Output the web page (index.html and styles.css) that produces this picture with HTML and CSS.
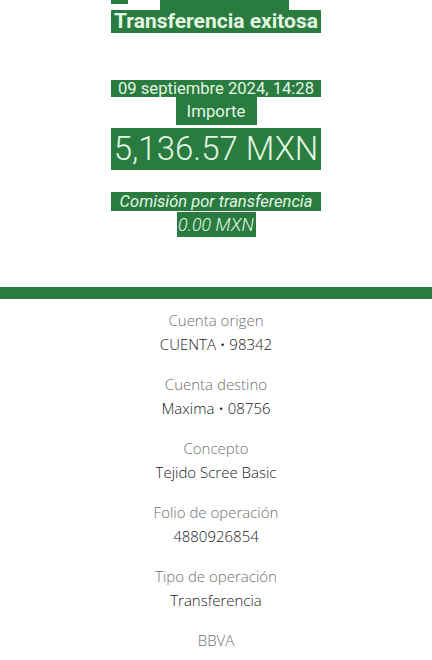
FILE: index.html
```html
<!DOCTYPE html>
<html lang="es">
<head>
    <meta charset="UTF-8">
    <meta name="viewport" content="width=device-width, initial-scale=1.0">
    <title>Transferencia exitosa</title>
    <link rel="stylesheet" href="styles.css">
</head>
<body>

<!-- Resumen -->
<div class="summary">
    <div class="stub">
        <span class="stub-a"></span>
        <span class="stub-b"></span>
    </div>
    <div class="line title"><span>Transferencia exitosa</span></div>
    <div class="line date"><span>09 septiembre 2024, 14:28</span></div>
    <div class="line label"><span>Importe</span></div>
    <div class="line amount"><span>5,136.57 MXN</span></div>
    <div class="line fee"><span>Comisión por transferencia</span></div>
    <div class="line fee-value"><span>0.00 MXN</span></div>
</div>

<div class="band"></div>

<!-- Detalle -->
<div class="details">
    <div class="item">
        <div class="item-label">Cuenta origen</div>
        <div class="item-value">CUENTA • 98342</div>
    </div>
    <div class="item">
        <div class="item-label">Cuenta destino</div>
        <div class="item-value">Maxima • 08756</div>
    </div>
    <div class="item">
        <div class="item-label">Concepto</div>
        <div class="item-value">Tejido Scree Basic</div>
    </div>
    <div class="item">
        <div class="item-label">Folio de operación</div>
        <div class="item-value">4880926854</div>
    </div>
    <div class="item">
        <div class="item-label">Tipo de operación</div>
        <div class="item-value">Transferencia</div>
    </div>
    <div class="item">
        <div class="item-label">BBVA</div>
    </div>
</div>

</body>
</html>
```

FILE: styles.css
```css
body {
    margin: 0;
    background-color: #fff;
    font-family: Roboto, "Liberation Sans", sans-serif;
}
.summary {
    height: 287px;
}
.stub {
    display: flex;
    align-items: flex-start;
    height: 10px;
}
.stub-a {
    width: 17px;
    height: 4px;
    margin-left: 111px;
    background-color: #2a7b3f;
}
.stub-b {
    width: 129px;
    height: 10px;
    margin-left: 32px;
    background-color: #2a7b3f;
}
.line {
    display: flex;
    justify-content: center;
}
.line span {
    display: block;
    width: 210px;
    text-align: center;
    white-space: nowrap;
    background-color: #2a7b3f;
    color: #e2f6e2;
}
.title span {
    font-size: 21px;
    font-weight: 700;
    line-height: 23px;
}
.date {
    margin-top: 47px;
}
.date span {
    font-size: 16.6px;
    line-height: 17px;
}
.label span {
    width: 81px;
    font-size: 16.8px;
    line-height: 28px;
}
.amount {
    margin-top: 3px;
}
.amount span {
    font-size: 33px;
    font-weight: 300;
    line-height: 42px;
}
.fee {
    margin-top: 22px;
}
.fee span {
    font-size: 16.5px;
    font-style: italic;
    line-height: 19px;
}
.fee-value {
    margin-top: 1px;
}
.fee-value span {
    width: 79px;
    font-size: 18px;
    font-style: italic;
    font-weight: 300;
    line-height: 25px;
}
.band {
    height: 12px;
    background-color: #2a7b3f;
}
.details {
    padding-top: 9px;
    font-family: "Open Sans", sans-serif;
    font-size: 15px;
    font-weight: 300;
    text-align: center;
}
.item {
    margin-bottom: 16px;
}
.item-label {
    line-height: 24px;
    color: #6f6f6f;
}
.item-value {
    line-height: 24px;
    color: #1a1a1a;
}
```
